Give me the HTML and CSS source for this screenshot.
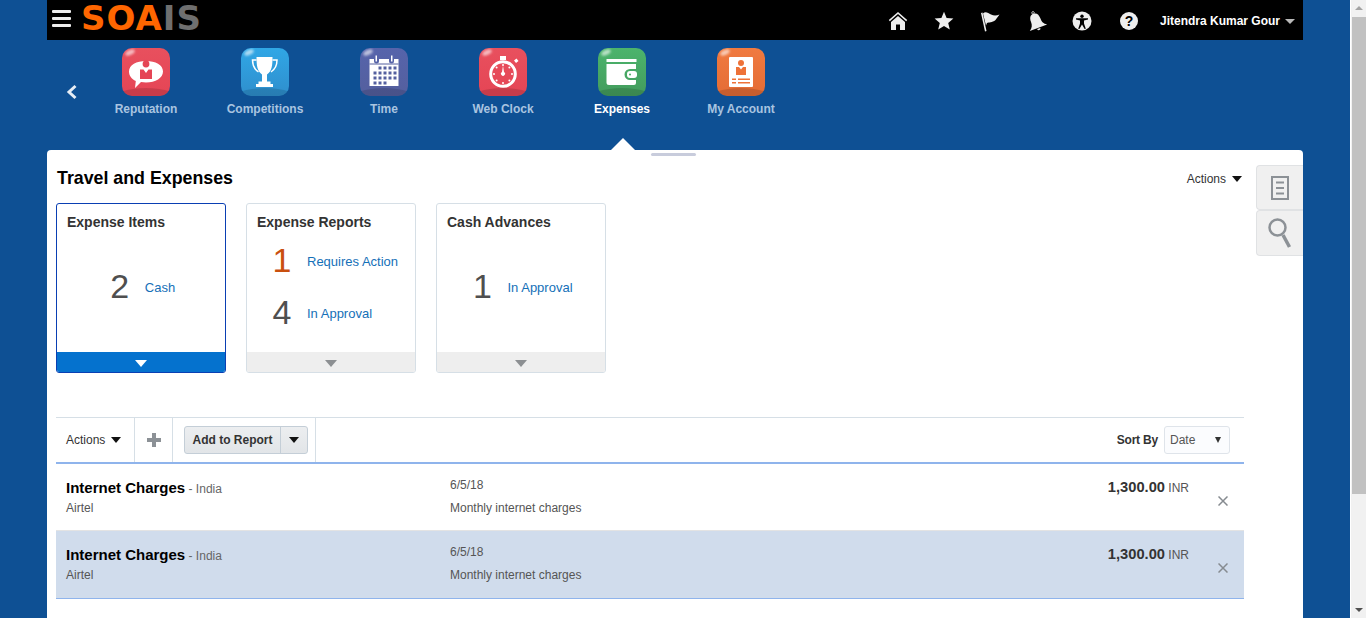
FILE: index.html
```html
<!DOCTYPE html>
<html lang="en">

<head>
    <meta charset="UTF-8">
    <meta name="viewport" content="width=device-width, initial-scale=1.0">
    <title>Travel and Expenses</title>
    <link rel="stylesheet" href="styles.css">
</head>

<body>
    <div class="page">
        <header class="topbar">
            <div class="menu-icon"><span></span><span></span><span></span></div>
            <div class="logo"><span class="logo-a">SOA</span><span class="logo-b">IS</span></div>
            <div class="top-icons">
                <svg class="top-icon" viewBox="0 0 20 20"><path d="M10 1 0.8 9.100l1 1.100L10 3.100l8.200 7.100 1-1.100z"/><path d="M10 5 3 11v8h5v-5.500h4V19h5v-8z"/></svg>
                <svg class="top-icon" viewBox="0 0 20 20"><path d="M10 .8l2.600 6.300 6.800.5-5.200 4.400 1.600 6.600L10 15l-5.800 3.600 1.600-6.600L.6 7.600l6.800-.5z"/></svg>
                <svg class="top-icon" viewBox="0 0 20 20"><path d="M1 2 2.500 1.500 6.500 20 5 20.500z"/><path d="M3 2.500C5.500 0 8 2 11 3.500c3 1.500 6 1 8.500 0-1.500 2-2.500 3.500-4 5.500-3.500 3-6.500 2-8.500 3l-1 2.500z"/></svg>
                <svg class="top-icon" viewBox="0 0 20 20"><g transform="rotate(-20 10 10)"><circle cx="10" cy="1.300" r="1.200" fill="none" stroke="#eee" stroke-width=".8"/><path d="M10 2.300C6.500 2.300 5 5 5 9c0 4-1 6-4.200 8.200h18.400C16 15 15 13 15 9c0-4-1.500-6.700-5-6.700z"/><path d="M8.300 18h3.400a1.700 1.700 0 0 1-3.400 0z"/></g></svg>
                <svg class="top-icon" viewBox="0 0 20 20"><circle cx="10" cy="10" r="9.500"/><circle cx="10" cy="5.200" r="1.700" fill="#000"/><path d="M4 7.300h12v1.200l-4 1v3l1.800 5.200-1.200.4L10 13.400l-2.600 4.700-1.200-.4L8 12.500v-3l-4-1z" fill="#000"/></svg>
                <svg class="top-icon top-icon-help" viewBox="0 0 20 20"><circle cx="10" cy="10" r="9"/><text x="10" y="15" text-anchor="middle" class="help-mark">?</text></svg>
            </div>
            <div class="user-menu">Jitendra Kumar Gour<i class="caret-user"></i></div>
        </header>

        <nav class="springboard">
            <svg class="back-arrow" viewBox="0 0 12 16"><path d="M9.500 2 3 8l6.500 6" fill="none" stroke="#e6edf5" stroke-width="3"/></svg>
            <div class="app-list">
                <div class="app">
                    <div class="tile tile-red">
                        <svg viewBox="0 0 48 48"><path d="M24 13c9.500 0 17 4 17 10.500S33.500 34.500 24 34.500c-2 0-3.500-.2-5-.5L13 40l.8-7C9.500 31 7 27.500 7 23.500 7 17 14.500 13 24 13z" fill="#fff"/><circle cx="24" cy="16" r="3.400" fill="#e54555"/><path d="M18 21.500h3.500L24 25l2.500-3.500H30V31H18z" fill="#e54555"/></svg>
                    </div>
                    <span class="app-label">Reputation</span>
                </div>
                <div class="app">
                    <div class="tile tile-blue">
                        <svg viewBox="0 0 48 48"><path d="M15.500 9h16c0 8-.5 14-5.500 17.500v7h3.500V36H32v3H15v-3h2.500v-2.500H21v-7C16 23 15.500 17 15.500 9z" fill="#fff"/><path d="M15.500 12H11.500c0 5 1.500 9 6 12M31.500 12h4.500c0 5-1.500 9-6 12" fill="none" stroke="#fff" stroke-width="1.500"/></svg>
                    </div>
                    <span class="app-label">Competitions</span>
                </div>
                <div class="app">
                    <div class="tile tile-indigo">
                        <svg viewBox="0 0 48 48"><path d="M9.500 11h4.500v2a2.500 2.500 0 0 0 5 0v-2h10v2a2.500 2.500 0 0 0 5 0v-2h4.500v27h-29z" fill="#fff"/><path d="M15.500 7.500h1.500v6h-1.500zM31 7.500h1.500v6H31z" fill="#fff"/><path d="M9.500 16h29" stroke="#54609f" stroke-width="1"/><path d="M20 19h3v3h-3zM25 19h3v3h-3zM30 19h3v3h-3zM35 19h3v3h-3zM15 24h3v3h-3zM20 24h3v3h-3zM25 24h3v3h-3zM30 24h3v3h-3zM35 24h3v3h-3zM15 29h3v3h-3zM20 29h3v3h-3zM25 29h3v3h-3zM30 29h3v3h-3zM35 29h3v3h-3zM15 34h3v3h-3zM20 34h3v3h-3zM25 34h3v3h-3z" fill="#54609f" transform="translate(-1.500 -.5)"/></svg>
                    </div>
                    <span class="app-label">Time</span>
                </div>
                <div class="app">
                    <div class="tile tile-red">
                        <svg viewBox="0 0 48 48"><circle cx="24" cy="26" r="12.300" fill="none" stroke="#fff" stroke-width="3"/><path d="M21 8h6v4h-6zM35 12.500l2.500-2 2 2.500-2.500 2z" fill="#fff"/><path d="M24 17.500l1 6.500a2 2 0 1 1-2 0z" fill="#fff"/><g fill="#fff"><circle cx="24" cy="17" r="1"/><circle cx="24" cy="35" r="1"/><circle cx="15" cy="26" r="1"/><circle cx="33" cy="26" r="1"/><circle cx="17.600" cy="19.600" r="1"/><circle cx="30.400" cy="19.600" r="1"/><circle cx="17.600" cy="32.400" r="1"/><circle cx="30.400" cy="32.400" r="1"/></g></svg>
                    </div>
                    <span class="app-label">Web Clock</span>
                </div>
                <div class="app app-active">
                    <div class="tile tile-green">
                        <svg viewBox="0 0 48 48"><path d="M8.500 11h30v3h-30z" fill="#fff"/><path d="M8.500 16h29.500v5h-6a5.500 5.500 0 0 0 0 11h6v3a2 2 0 0 1-2 2H11a2.500 2.500 0 0 1-2.500-2.500z" fill="#fff"/><rect x="29" y="23" width="10" height="7" rx="3" fill="#fff"/><circle cx="32" cy="26.500" r="1" fill="#46a863"/></svg>
                    </div>
                    <span class="app-label">Expenses</span>
                </div>
                <div class="app">
                    <div class="tile tile-orange">
                        <svg viewBox="0 0 48 48"><rect x="12" y="9" width="24" height="30" rx="1" fill="#fff"/><circle cx="24" cy="15" r="3" fill="#ee7238"/><path d="M19 19h3l2 2.500 2-2.500h3v8H19z" fill="#ee7238"/><path d="M15 30.500h4v1.500h-4zM21 30.500h12v1.500H21zM15 34h4v1.500h-4zM21 34h12v1.500H21z" fill="#ee7238"/></svg>
                    </div>
                    <span class="app-label">My Account</span>
                </div>
            </div>
        </nav>

        <main class="panel">
            <i class="panel-notch"></i>
            <i class="panel-handle"></i>
            <div class="side-tabs">
                <div class="side-tab">
                    <svg viewBox="0 0 18 24"><path d="M1 1h16v22H1z" fill="none" stroke="#8c9196" stroke-width="2"/><path d="M5 6.500h8M5 12h8M5 17.500h8" stroke="#8c9196" stroke-width="2"/></svg>
                </div>
                <div class="side-tab">
                    <svg viewBox="0 0 24 32"><circle cx="9.500" cy="10.500" r="8" fill="none" stroke="#8c9196" stroke-width="2.500"/><path d="M15 18l6.500 12" stroke="#8c9196" stroke-width="3.500"/></svg>
                </div>
            </div>

            <div class="panel-head">
                <h1>Travel and Expenses</h1>
                <div class="actions-link">Actions<i class="caret"></i></div>
            </div>

            <div class="cards">
                <div class="card card-selected">
                    <h2>Expense Items</h2>
                    <div class="card-body">
                        <div class="stat"><span class="stat-num">2</span><a class="stat-link">Cash</a></div>
                    </div>
                    <div class="card-foot"><i></i></div>
                </div>
                <div class="card">
                    <h2>Expense Reports</h2>
                    <div class="card-body card-body-two">
                        <div class="stat"><span class="stat-num stat-alert">1</span><a class="stat-link">Requires Action</a></div>
                        <div class="stat"><span class="stat-num">4</span><a class="stat-link">In Approval</a></div>
                    </div>
                    <div class="card-foot"><i></i></div>
                </div>
                <div class="card">
                    <h2>Cash Advances</h2>
                    <div class="card-body">
                        <div class="stat"><span class="stat-num">1</span><a class="stat-link">In Approval</a></div>
                    </div>
                    <div class="card-foot"><i></i></div>
                </div>
            </div>

            <div class="list-area">
                <div class="toolbar">
                    <div class="tool-cell tool-actions">Actions<i class="caret"></i></div>
                    <div class="tool-cell tool-add">
                        <svg viewBox="0 0 14 14" width="14" height="14"><path d="M5 0h4v5h5v4H9v5H5V9H0V5h5z" fill="#8c9196"/></svg>
                    </div>
                    <div class="tool-cell tool-button">
                        <div class="split-btn">
                            <span class="split-main">Add to Report</span>
                            <span class="split-arrow"><i class="caret"></i></span>
                        </div>
                    </div>
                    <div class="sort">
                        <span class="sort-label">Sort By</span>
                        <div class="sort-select">Date<i class="caret caret-small"></i></div>
                    </div>
                </div>

                <div class="row">
                    <div class="row-main">
                        <div><b class="row-title">Internet Charges</b><span class="row-loc"> - India</span></div>
                        <div class="row-sub">Airtel</div>
                    </div>
                    <div class="row-mid">
                        <div>6/5/18</div>
                        <div class="row-desc">Monthly internet charges</div>
                    </div>
                    <div class="row-amount"><b>1,300.00</b> INR</div>
                    <svg class="row-x" viewBox="0 0 10 10"><path d="M.5.500l9 9M9.500.500l-9 9" stroke="#868b90" stroke-width="1.500"/></svg>
                </div>
                <div class="row row-selected">
                    <div class="row-main">
                        <div><b class="row-title">Internet Charges</b><span class="row-loc"> - India</span></div>
                        <div class="row-sub">Airtel</div>
                    </div>
                    <div class="row-mid">
                        <div>6/5/18</div>
                        <div class="row-desc">Monthly internet charges</div>
                    </div>
                    <div class="row-amount"><b>1,300.00</b> INR</div>
                    <svg class="row-x" viewBox="0 0 10 10"><path d="M.5.500l9 9M9.500.500l-9 9" stroke="#868b90" stroke-width="1.500"/></svg>
                </div>
            </div>
        </main>
    </div>

    <!-- scrollbar -->
    <div class="scrollbar">
        <i class="scroll-up"></i>
        <div class="scroll-thumb"></div>
        <i class="scroll-down"></i>
    </div>
</body>

</html>
```

FILE: styles.css
```css
html,
body {
    height: 618px;
    overflow: hidden;
}

body {
    margin: 0;
    display: flex;
    font-family: "Liberation Sans", Arial, sans-serif;
    font-size: 12px;
    color: #333;
    background-color: #0e5094;
}

i {
    display: block;
}

.page {
    width: 1256px;
    margin: 0 47px;
    flex: none;
    display: flex;
    flex-direction: column;
}

/* top black bar */
.topbar {
    height: 40px;
    box-sizing: border-box;
    padding-top: 2px;
    flex: none;
    background-color: #000;
    display: flex;
    align-items: center;
}

.menu-icon {
    width: 19px;
    margin: 0 0 6px 5px;
    display: flex;
    flex-direction: column;
    gap: 4px;
}

.menu-icon span {
    display: block;
    height: 3px;
    background-color: #eee;
    border-radius: 1px;
}

.logo {
    margin: 0 0 6px 10px;
    line-height: 34px;
    font-family: "DejaVu Sans", sans-serif;
    font-weight: bold;
    font-size: 34px;
    letter-spacing: 1px;
    white-space: nowrap;
}

.logo-a {
    color: #ff6600;
}

.logo-b {
    color: #6f6f6f;
}

.top-icons {
    margin-left: auto;
    display: flex;
    gap: 26px;
    align-items: center;
}

.top-icon {
    width: 20px;
    height: 20px;
    fill: #eee;
    overflow: visible;
}

.top-icon-help {
    margin-left: 1px;
}

.help-mark {
    font-family: "Liberation Sans", sans-serif;
    font-weight: bold;
    font-size: 14px;
    fill: #000;
}

.user-menu {
    margin-left: 21px;
    margin-right: 8px;
    display: flex;
    align-items: center;
    font-weight: bold;
    color: #fff;
}

.caret-user {
    margin-left: 5px;
    border-left: 5px solid transparent;
    border-right: 5px solid transparent;
    border-top: 5px solid #b9b9b9;
}

/* app icons */
.springboard {
    height: 110px;
    flex: none;
    display: flex;
    position: relative;
}

.back-arrow {
    width: 12px;
    height: 16px;
    margin: 44px 0 0 19px;
    flex: none;
}

.app-list {
    display: flex;
    margin-left: 8.5px;
}

.app {
    width: 119px;
    padding-top: 8px;
    display: flex;
    flex-direction: column;
    align-items: center;
}

.tile {
    width: 48px;
    height: 48px;
    border-radius: 10px;
    position: relative;
    overflow: hidden;
}

.tile svg {
    position: relative;
    display: block;
    width: 48px;
    height: 48px;
}

/* gloss on top left */
.tile::before {
    content: "";
    position: absolute;
    left: 3px;
    top: 2px;
    width: 10px;
    height: 5px;
    border-radius: 50%;
    background-color: rgba(255, 255, 255, .6);
    filter: blur(1px);
    transform: rotate(-25deg);
}

/* darker band at the bottom */
.tile::after {
    content: "";
    position: absolute;
    left: -10px;
    right: -10px;
    bottom: -16px;
    height: 24px;
    border-radius: 50%;
    background-color: rgba(0, 0, 0, .13);
}

.tile-red {
    background: linear-gradient(#e8505e, #e54555);
}

.tile-blue {
    background: linear-gradient(#30a7e6, #2f8fcd);
}

.tile-indigo {
    background: linear-gradient(#5664ab, #545f9e);
}

.tile-green {
    background: linear-gradient(#4cb46c, #439c5d);
}

.tile-orange {
    background: linear-gradient(#f07a40, #e46c35);
}

.app-label {
    margin-top: 6px;
    font-weight: bold;
    color: #a9c4e0;
    line-height: 14px;
}

.app-active .app-label {
    color: #fff;
}

/* white panel */
.panel {
    flex: 1;
    background-color: #fff;
    border-radius: 4px 4px 0 0;
    padding: 0 9px;
    position: relative;
}

.panel-notch {
    position: absolute;
    left: 564px;
    top: -12px;
    border-left: 12px solid transparent;
    border-right: 12px solid transparent;
    border-bottom: 12px solid #fff;
}

.panel-handle {
    position: absolute;
    left: 604px;
    top: 3px;
    width: 45px;
    height: 3px;
    border-radius: 2px;
    background-color: #c8ccdc;
}

.side-tabs {
    position: absolute;
    left: 1209px;
    top: 15px;
    width: 47px;
}

.side-tab {
    height: 45px;
    box-sizing: border-box;
    background-color: #f0f0f0;
    border: 1px solid #e0e2e4;
    border-right: none;
    border-radius: 4px 0 0 4px;
    display: flex;
    align-items: center;
    justify-content: center;
}

.side-tab svg {
    width: 18px;
    height: 24px;
}

.side-tab + .side-tab {
    height: 46px;
}

.side-tab + .side-tab svg {
    width: 24px;
    height: 32px;
}

.panel-head {
    height: 53px;
    width: 1187px;
    display: flex;
    justify-content: space-between;
    align-items: center;
    padding: 5px 0 0 1px;
    box-sizing: border-box;
}

.panel-head h1 {
    margin: 0 0 2px;
    font-size: 17.800px;
    font-weight: bold;
    color: #000;
}

.actions-link {
    display: flex;
    align-items: center;
    color: #333;
    margin-right: 1px;
}

.caret {
    margin-left: 6px;
    border-left: 5px solid transparent;
    border-right: 5px solid transparent;
    border-top: 6px solid #111;
}

/* infotiles */
.cards {
    display: flex;
    gap: 20px;
}

.card {
    width: 170px;
    height: 170px;
    box-sizing: border-box;
    border: 1px solid #d6dfe6;
    border-radius: 3px;
    display: flex;
    flex-direction: column;
    overflow: hidden;
}

.card h2 {
    margin: 0;
    padding: 10px 10px 0;
    font-size: 14px;
    line-height: 17px;
    color: #333;
}

.card-body {
    flex: 1;
    display: flex;
    flex-direction: column;
    justify-content: center;
    align-items: center;
    padding: 0 0 9px 3px;
}

.card-body-two {
    gap: 16px;
    align-items: flex-start;
    padding: 0 0 8px 25px;
}

.stat {
    display: flex;
    align-items: center;
    height: 36px;
}

.stat-num {
    font-size: 34px;
    color: #4f4f4f;
    width: 20px;
    margin: 0 15px 2px 0;
    text-align: center;
}

.stat-alert {
    color: #c9500f;
}

.stat-link {
    font-size: 13px;
    color: #1570b8;
}

.card-foot {
    height: 20px;
    box-sizing: border-box;
    padding-top: 2px;
    flex: none;
    background-color: #eeeeee;
    display: flex;
    align-items: center;
    justify-content: center;
}

.card-foot i {
    border-left: 6px solid transparent;
    border-right: 6px solid transparent;
    border-top: 7px solid #8c8f92;
}

.card-selected {
    border-color: #0a3fb3;
}

.card-selected .card-foot {
    background-color: #0572ce;
}

.card-selected .card-foot i {
    border-top-color: #fff;
}

/* list */
.list-area {
    width: 1188px;
    margin-top: 44px;
}

.toolbar {
    height: 45px;
    box-sizing: border-box;
    border-top: 1px solid #d6dfe6;
    display: flex;
    align-items: center;
}

.tool-cell {
    height: 100%;
    display: flex;
    align-items: center;
    border-right: 1px solid #d6dfe6;
    box-sizing: border-box;
}

.tool-actions {
    width: 79px;
    padding-left: 10px;
}

.tool-add {
    width: 38px;
    justify-content: center;
}

.tool-button {
    width: 143px;
    padding-left: 11px;
}

.split-btn {
    width: 124px;
    height: 28px;
    box-sizing: border-box;
    border: 1px solid #c4ced7;
    border-radius: 3px;
    background: linear-gradient(#eceef0, #e2e5e8);
    display: flex;
    align-items: center;
    font-weight: bold;
    color: #333;
}

.split-main {
    width: 95px;
    text-align: center;
    border-right: 1px solid #c4ced7;
    line-height: 26px;
}

.split-arrow {
    flex: 1;
    display: flex;
    justify-content: center;
}

.split-arrow .caret {
    margin-left: 0;
}

.sort {
    margin-left: auto;
    margin-right: 14px;
    display: flex;
    align-items: center;
    gap: 6px;
}

.sort-label {
    font-weight: bold;
    letter-spacing: -.2px;
}

.sort-select {
    width: 66px;
    height: 28px;
    box-sizing: border-box;
    border: 1px solid #dfe4ea;
    border-radius: 3px;
    background-color: #fbfcfe;
    padding: 0 8px 0 5px;
    display: flex;
    align-items: center;
    justify-content: space-between;
    color: #555;
}

.caret-small {
    border-left-width: 3.500px;
    border-right-width: 3.500px;
    border-top-width: 6px;
    border-top-color: #333;
}

.row {
    height: 68px;
    box-sizing: border-box;
    padding: 14px 0 0 10px;
    display: flex;
    border-top: 2px solid #8fb4ec;
    color: #555;
    position: relative;
}

.row + .row {
    border-top: 1px solid #e3e3e3;
    height: 69px;
    border-bottom: 1px solid #8fb4ec;
}

.row-selected {
    background-color: #d0dcec;
}

.row-main {
    width: 384px;
    padding-top: 2px;
    line-height: 15px;
}

.row-title {
    font-size: 15px;
    color: #000;
}

.row-loc {
    color: #666;
}

.row-sub {
    margin-top: 4px;
}

.row-mid {
    line-height: 15px;
}

.row-desc {
    margin-top: 8px;
}

.row-amount {
    margin-left: auto;
    margin-right: 55px;
    padding-top: 2px;
    line-height: 15px;
    color: #555;
}

.row-amount b {
    font-size: 14.700px;
    color: #333;
}

.row-x {
    position: absolute;
    right: 16px;
    top: 32px;
    width: 10px;
    height: 10px;
}

/* scrollbar */
.scrollbar {
    flex: 1;
    background-color: #f1f1f1;
    border-left: 1px solid #fff;
    display: flex;
    flex-direction: column;
    align-items: center;
}

.scroll-up {
    margin-top: 6px;
    border-left: 4px solid transparent;
    border-right: 4px solid transparent;
    border-bottom: 4px solid #a3a3a3;
}

.scroll-thumb {
    width: 14px;
    height: 477px;
    margin-top: 7px;
    background-color: #c1c1c1;
}

.scroll-down {
    margin-top: auto;
    margin-bottom: 6px;
    border-left: 4px solid transparent;
    border-right: 4px solid transparent;
    border-top: 4px solid #505050;
}
```
